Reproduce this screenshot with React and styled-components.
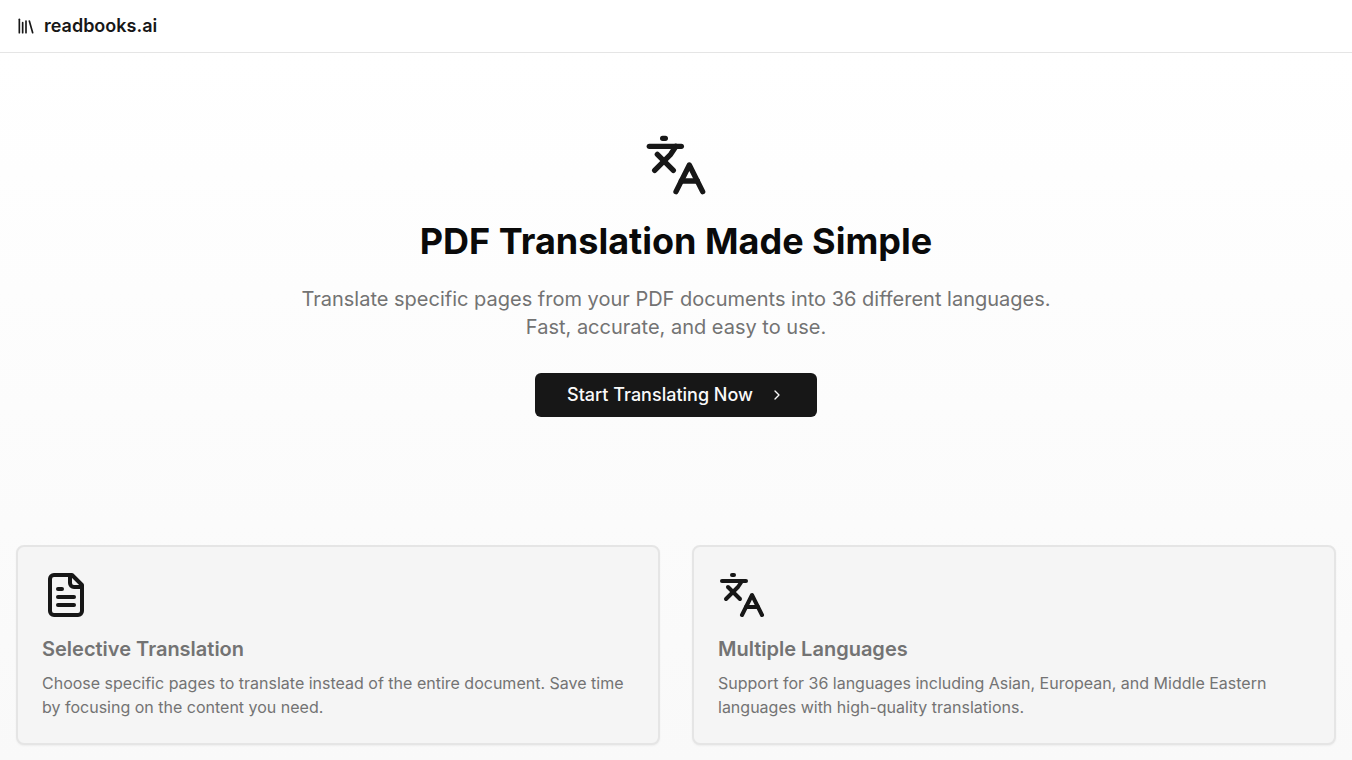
import React from 'react';
import styled, { createGlobalStyle } from 'styled-components';
import { Library, Languages, ChevronRight } from 'lucide-react';

const GlobalStyle = createGlobalStyle`
* { box-sizing:border-box; margin:0; padding:0; }
body {
  font-family:Inter, sans-serif;
  color:#0a0a0a;
  background:#fff;
  line-height:24px;
  -webkit-font-smoothing:antialiased;
}
`;
const Page = styled.div`
display:flex;
flex-direction:column;
min-height:100vh;
`;
const Header = styled.header`
display:flex;
align-items:center;
padding:12px 16px;
border-bottom:1px solid #e5e5e5;
`;
const Brand = styled.a`
display:flex;
align-items:center;
gap:8px;
font-size:18px;
line-height:28px;
font-weight:600;
color:#171717;
text-decoration:none;
`;
const Main = styled.main`
flex:1;
background:linear-gradient(to bottom, #fff, #f9f9f9);
`;
const Hero = styled.section`
display:flex;
flex-direction:column;
align-items:center;
text-align:center;
padding:80px 16px 128px;
color:#171717;
`;
const Title = styled.h1`
margin:24px 0;
font-size:36px;
line-height:40px;
font-weight:700;
color:#0a0a0a;
`;
const Lead = styled.p`
max-width:768px;
margin-bottom:32px;
font-size:20px;
line-height:28px;
color:#737373;
`;
const StartButton = styled.button`
display:flex;
align-items:center;
gap:16px;
height:44px;
padding:0 32px;
border:0;
border-radius:6px;
background:#171717;
color:#fafafa;
font-family:inherit;
font-size:18px;
line-height:28px;
font-weight:500;
cursor:pointer;
`;
const Features = styled.section`
display:grid;
grid-template-columns:1fr 1fr;
gap:32px;
padding:0 16px 16px;
`;
const Card = styled.article`
padding:24px;
border:2px solid #e5e5e5;
border-radius:8px;
background:#f5f5f5;
color:#171717;
box-shadow:0 1px 2px rgba(0, 0, 0, 0.05);
& svg {
  display:block;
}
`;
const CardTitle = styled.h2`
margin:16px 0 8px;
font-size:20px;
line-height:28px;
font-weight:600;
color:#737373;
`;
const CardText = styled.p`
font-size:16px;
line-height:24px;
color:#737373;
`;

// page with a rounded fold, lucide's own FileText has a sharp one
const DocumentIcon = ({ size }) => (
  <svg
    width={size}
    height={size}
    viewBox="0 0 24 24"
    fill="none"
    stroke="currentColor"
    strokeWidth="2"
    strokeLinecap="round"
    strokeLinejoin="round"
    aria-hidden="true"
  >
    <path d="M15 2H6a2 2 0 0 0-2 2v16a2 2 0 0 0 2 2h12a2 2 0 0 0 2-2V7Z" />
    <path d="M14 2v4a2 2 0 0 0 2 2h4" />
    <path d="M10 9H8" />
    <path d="M16 13H8" />
    <path d="M16 17H8" />
  </svg>
);

const features = [
  {
    icon: DocumentIcon,
    title: 'Selective Translation',
    text: 'Choose specific pages to translate instead of the entire document. Save time by focusing on the content you need.',
  },
  {
    icon: Languages,
    title: 'Multiple Languages',
    text: 'Support for 36 languages including Asian, European, and Middle Eastern languages with high-quality translations.',
  },
];

const App = () => {
  return (
    <Page>
      <GlobalStyle />
      <Header>
        <Brand href="/">
          <Library size={20} />
          readbooks.ai
        </Brand>
      </Header>
      <Main>
        <Hero>
          <Languages size={64} />
          <Title>PDF Translation Made Simple</Title>
          <Lead>
            Translate specific pages from your PDF documents into 36 different languages. Fast, accurate, and easy to use.
          </Lead>
          <StartButton type="button">
            Start Translating Now
            <ChevronRight size={16} />
          </StartButton>
        </Hero>
        <Features>
          {features.map(({ icon: Icon, title, text }) => (
            <Card key={title}>
              <Icon size={48} />
              <CardTitle>{title}</CardTitle>
              <CardText>{text}</CardText>
            </Card>
          ))}
        </Features>
      </Main>
    </Page>
  );
};

export default App;
